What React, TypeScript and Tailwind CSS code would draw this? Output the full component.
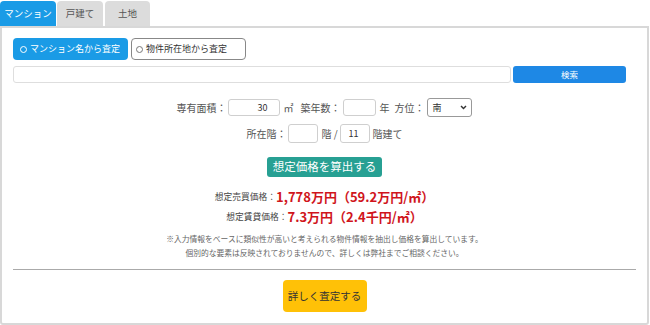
import React from "react";

const jp = "font-['Noto_Sans_CJK_JP',sans-serif]";

function Radio({ active }: { active: boolean }) {
  return (
    <span
      className={
        active
          ? "inline-block w-[7px] h-[7px] rounded-full border border-white bg-[#1a9be6]"
          : "inline-block w-[7px] h-[7px] rounded-full border border-[#777] bg-white"
      }
    />
  );
}

export default function App() {
  return (
    <div className={`w-[650px] h-[325px] bg-white ${jp} overflow-hidden`}>
      {/* tabs */}
      <div className="flex items-end gap-[1px] pt-[1px] h-[26px]">
        <div className="w-[56px] h-[25px] rounded-t-[4px] bg-[#1a9be6] text-white text-[9.5px] flex items-center justify-center">
          マンション
        </div>
        <div className="w-[46px] h-[25px] rounded-t-[4px] bg-[#dcdcdc] text-[#555] text-[9.5px] flex items-center justify-center">
          戸建て
        </div>
        <div className="ml-[1px] w-[45px] h-[25px] rounded-t-[4px] bg-[#dcdcdc] text-[#555] text-[9.5px] flex items-center justify-center">
          土地
        </div>
      </div>
      {/* panel */}
      <div className="w-[649px] h-[299px] border-2 border-[#d8d8d8] rounded-b-[3px] px-[11px] pt-[10px] flex flex-col">
        <div className="flex gap-[3px] h-[22px]">
          <div className="w-[115px] h-[22px] rounded-[4px] bg-[#1a9be6] text-white text-[9px] flex items-center gap-[3px] pl-[7px]">
            <Radio active />
            <span>マンション名から査定</span>
          </div>
          <div className="w-[115px] h-[22px] rounded-[4px] border border-[#888] bg-white text-[#333] text-[9px] flex items-center gap-[3px] pl-[4px]">
            <Radio active={false} />
            <span>物件所在地から査定</span>
          </div>
        </div>
        <div className="mt-[6px] flex gap-[2px] h-[17px] pr-[10px]">
          <div className="flex-1 h-[17px] rounded-[3px] border border-[#dedede] bg-white" />
          <div className="w-[113px] h-[17px] rounded-[3px] bg-[#1e88e5] text-white text-[8.5px] flex items-center justify-center">
            検索
          </div>
        </div>
        {/* row 1 */}
        <div className="mt-[15px] flex items-center justify-center h-[19px] text-[10px] text-[#555] pr-[1px]">
          <span>専有面積：</span>
          <div className="ml-[1px] w-[52px] h-[17px] rounded-[3px] border border-[#cfcfcf] text-[9px] text-[#333] flex items-center justify-end pr-[11px]">
            30
          </div>
          <span className="ml-[4px]">㎡</span>
          <span className="ml-[7px]">築年数：</span>
          <div className="ml-[2px] w-[33px] h-[17px] rounded-[3px] border border-[#cfcfcf]" />
          <span className="ml-[4px]">年</span>
          <span className="ml-[5px]">方位：</span>
          <div className="ml-[2px] w-[45px] h-[19px] rounded-[3px] border border-[#999] text-[9px] text-[#333] flex items-center justify-between pl-[5px] pr-[4px]">
            <span>南</span>
            <svg width="7" height="5" viewBox="0 0 7 5">
              <path d="M1 1 L3.5 3.6 L6 1" fill="none" stroke="#333" strokeWidth="1.4" />
            </svg>
          </div>
        </div>
        {/* row 2 */}
        <div className="mt-[7px] flex items-center justify-center h-[19px] text-[10px] text-[#555]">
          <span>所在階：</span>
          <div className="ml-[2px] w-[30px] h-[19px] rounded-[3px] border border-[#cfcfcf]" />
          <span className="ml-[3px]">階 /</span>
          <div className="ml-[2px] w-[30px] h-[19px] rounded-[3px] border border-[#cfcfcf] text-[9px] text-[#333] flex items-center pl-[8px]">
            11
          </div>
          <span className="ml-[3px]">階建て</span>
        </div>
        {/* calc button */}
        <div className="mt-[14px] flex justify-center">
          <div className="w-[115px] h-[20px] rounded-[3px] bg-[#27a093] text-white text-[11.5px] flex items-center justify-center">
            想定価格を算出する
          </div>
        </div>
        {/* results */}
        <div className="mt-[10px] flex flex-col items-center">
          <div className="h-[20px] flex items-center">
            <span className="text-[8.75px] text-[#444]">想定売買価格：</span>
            <span className="text-[13px] font-bold text-[#d0151c]">1,778万円（59.2万円/㎡）</span>
          </div>
          <div className="h-[20px] flex items-center">
            <span className="text-[8.75px] text-[#444]">想定賃貸価格：</span>
            <span className="text-[13px] font-bold text-[#d0151c]">7.3万円（2.4千円/㎡）</span>
          </div>
        </div>
        <div className="mt-[5px] flex flex-col items-center text-[7.75px] text-[#666] leading-[14px]">
          <span>※入力情報をベースに類似性が高いと考えられる物件情報を抽出し価格を算出しています。</span>
          <span>個別的な要素は反映されておりませんので、詳しくは弊社までご相談ください。</span>
        </div>
        <div className="mt-[9px] h-px bg-[#aaa]" />
        <div className="mt-[10px] flex justify-center">
          <div className="w-[84px] h-[32px] rounded-[4px] bg-[#ffc107] text-[#333] text-[10.5px] flex items-center justify-center">
            詳しく査定する
          </div>
        </div>
      </div>
    </div>
  );
}
